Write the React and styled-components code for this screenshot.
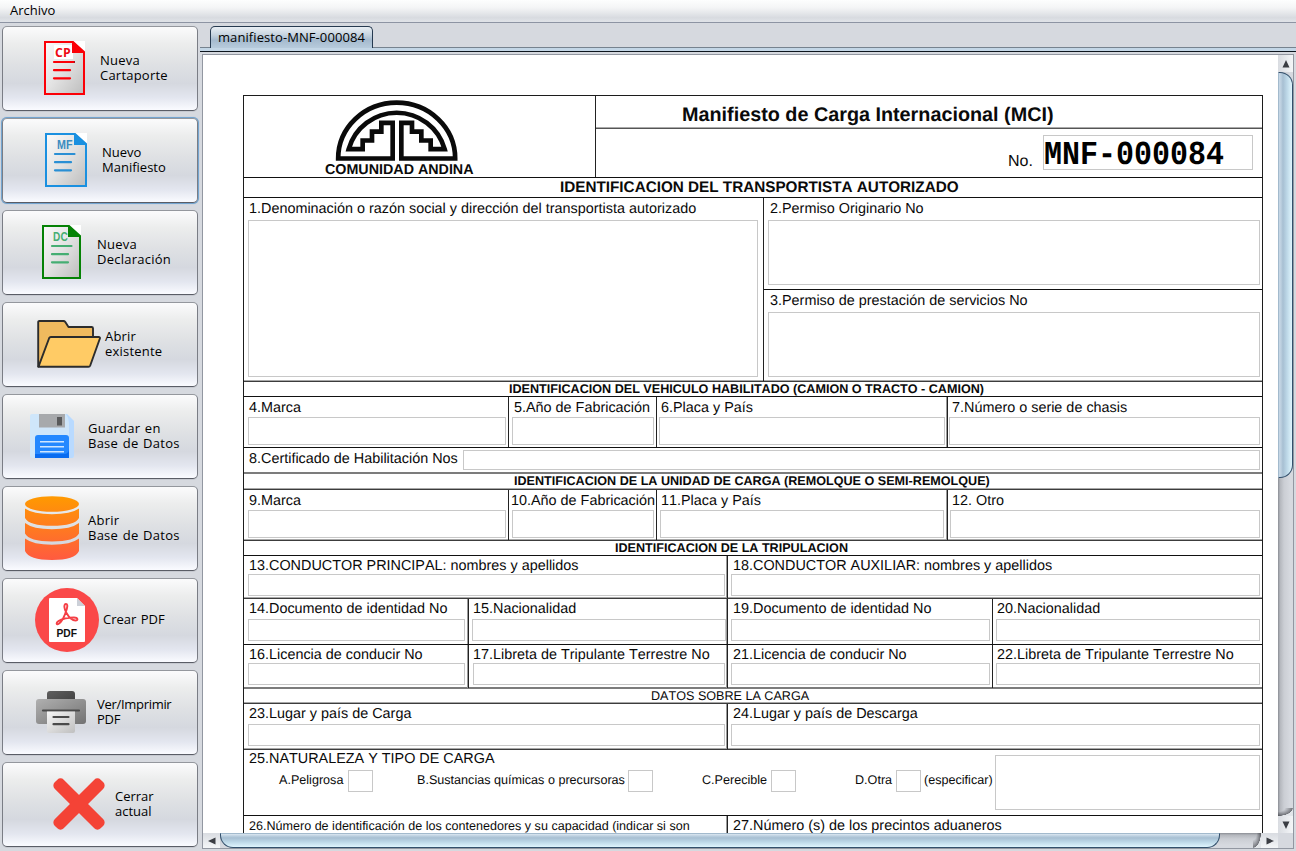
import React from "react";
import styled, { createGlobalStyle } from "styled-components";

const GlobalStyle = createGlobalStyle`
  * { box-sizing: border-box; }
  html, body { margin: 0; padding: 0; }
  body { background: #d6d9df; overflow: hidden; color: #000; }
`;

const uiFont = `13px/15px "Open Sans", "Noto Sans", sans-serif`;
const formFont = `"Liberation Sans", Arial, sans-serif`;

/* ---------- window ---------- */
const Window = styled.div`
  width: 1296px; height: 851px; overflow: hidden;
  display: flex; flex-direction: column;
  background: #d6d9df; font: ${uiFont}; font-variant-ligatures: none;
`;
const MenuBar = styled.div`
  height: 23px; flex: none; padding: 3px 10px 0;
  background: linear-gradient(#fdfefe 0, #f4f5f6 35%, #d8dbe0 80%, #e0e3e8 100%);
  border-bottom: 1px solid #8d94a3;
`;
const Body = styled.div`display: flex; flex: 1; min-height: 0;`;

/* ---------- sidebar ---------- */
const Sidebar = styled.div`
  width: 200px; flex: none; padding: 3px 0 0 2px;
  display: flex; flex-direction: column; gap: 7px;
`;
const ToolButton = styled.button`
  width: 196px; height: 85px; flex: none;
  display: flex; align-items: center; text-align: left;
  margin: 0; padding: 0 0 2px ${p => p.$left}px; gap: ${p => p.$gap}px;
  font: ${uiFont}; font-variant-ligatures: none; color: #000; white-space: pre;
  letter-spacing: ${p => p.$ls || 0}px; word-spacing: ${p => p.$ws || 0}px;
  border: 1px solid; border-color: #94979d #7a7d85 #5a5d66 #7a7d85; border-radius: 5px;
  background: linear-gradient(#fbfbfc 0, #eceded 20%, #dfe1e4 45%, #d5d8df 68%, #e3e6ef 85%, #fafbff 100%);
  box-shadow: ${p => p.$focused ? "0 0 0 1px #74a5d0, 0 0 1px 1px #8fb3d3" : "0 1px 0 #c6c9d0"};
  svg { flex: none; display: block; }
`;

/* ---------- tabs ---------- */
const Main = styled.div`
  flex: 1; min-width: 0; padding-top: 3px;
  display: flex; flex-direction: column;
`;
const TabStrip = styled.div`
  height: 26px; flex: none; display: flex; align-items: flex-start; padding-left: 10px;
  background: linear-gradient(#d6d9df 0 21px, #77838f 21px 22px, #c3d6e6 22px 25px, #0d151e 25px);
`;
const Tab = styled.div`
  width: 163px; height: 22px; padding: 3px 0 0 7px; white-space: nowrap; letter-spacing: 0.08px;
  border: 1px solid #263a50; border-bottom: 0; border-radius: 5px 5px 0 0;
  background: linear-gradient(#e9eff4 0, #c5d3df 38%, #a5bace 62%, #b7cbdc 100%);
`;

/* ---------- scroll pane ---------- */
const ScrollPane = styled.div`
  width: 1092px; height: 795px; margin: 2px 0 0 2px;
  border: 1px solid #9297a1;
  display: grid; grid-template-columns: 1075px 15px; grid-template-rows: 778px 15px;
`;
const Viewport = styled.div`background: #fff; overflow: hidden; padding: 40px 0 0 40px;`;
const VBar = styled.div`
  display: flex; flex-direction: column; overflow: hidden;
  background: linear-gradient(90deg, #8a8d94 0, #b4b7bd 2px, #cbced4 6px, #d6d9df 12px);
`;
const VThumb = styled.div`
  height: 406px; border: 1px solid #33506c; border-left-color: #a3bacd;
  border-radius: 0 13px 13px 0;
  background: linear-gradient(90deg, #c8d8e6 0, #bdd0e0 15%, #a7bfd2 30%, #bcd7e7 60%, #dff5fd 100%);
`;
const HBar = styled.div`
  display: flex; overflow: hidden;
  background: linear-gradient(#8a8d94 0, #b4b7bd 2px, #cbced4 6px, #d6d9df 12px);
`;
const HThumb = styled.div`
  width: 1000px; border: 1px solid #33506c; border-top-color: #a3bacd;
  border-radius: 0 0 13px 13px;
  background: linear-gradient(#dbe7f1 0, #bdd0e0 15%, #a7bfd2 30%, #bcd7e7 60%, #dff5fd 100%);
`;
const Spacer = styled.div`flex: 1;`;
const TrackEnd = styled.div`
  width: ${p => p.$w}px; height: ${p => p.$h}px; flex: none;
  background: radial-gradient(ellipse ${p => p.$w}px ${p => p.$h}px at 0 0,
    transparent 45%, rgba(50, 52, 58, 0.6) 96%, #e3e6ea 100%);
`;
const ArrowButton = styled.div`
  width: ${p => p.$w}px; height: ${p => p.$h}px; flex: none;
  display: flex; align-items: center; justify-content: center;
  background: linear-gradient(${p => p.$dir}, #d9dce1, #f4f6f8);
`;
const Corner = styled.div`background: #d6d9df;`;

/* ---------- form ---------- */
const Sheet = styled.div`
  width: 1020px; border: 1px solid #1c1c1c; border-bottom: 0;
  font: 14.4px/20px ${formFont}; text-rendering: geometricPrecision; font-kerning: none; color: #0a0a0a;
  white-space: nowrap;
`;
const line = { sharp: ["#111", "transparent"], soft: ["#3c3c3c", "#a8a8a8"], split: ["#7c7c7c", "#7c7c7c"] };
const Row = styled.div`
  display: flex; height: ${p => p.$h}px;
  border-bottom: 1px solid ${p => line[p.$line || "sharp"][0]};
  box-shadow: inset 0 -1px ${p => line[p.$line || "sharp"][1]};
`;
const SectionTitle = styled(Row)`
  align-items: center; padding: 0 0 ${p => p.$lift || 0}px ${p => p.$x}px;
  font-size: ${p => p.$size}px; font-weight: ${p => p.$plain ? 400 : 700};
  line-height: 14px;
`;
const Cell = styled.div`
  width: ${p => p.$w ? p.$w + "px" : "auto"}; flex: ${p => p.$w ? "none" : "1"};
  display: flex; flex-direction: column; align-items: stretch;
  border-right: ${p => p.$w ? "1px solid #222" : "0"};
  box-shadow: ${p => p.$w && p.$soft ? "inset -1px 0 #9a9a9a" : "none"};
`;
const Label = styled.div`
  height: ${p => p.$box}px; line-height: ${p => p.$lh + 2}px; padding-left: ${p => p.$x}px; flex: none;
  font-size: ${p => p.$size || 14.4}px;
`;
const Field = styled.div`
  height: ${p => p.$h}px; margin: 0 ${p => p.$r}px 0 ${p => p.$l}px; flex: none;
  border: 1px solid #c8c8c8; background: #fff;
`;

const HeaderLogo = styled.div`
  width: 352px; border-right: 1px solid #222; padding: 4px 0 0 81px; flex: none;
  font-size: 14.3px; font-weight: 700; line-height: 16px;
  svg { display: block; margin-left: 9px; }
`;
const HeaderRight = styled.div`flex: 1; display: flex; flex-direction: column;`;
const FormTitle = styled.div`
  height: 33px; padding: 4px 0 0 86px; border-bottom: 1px solid #555; box-shadow: inset 0 -1px #aaa;
  font-size: 19.8px; font-weight: 700; line-height: 30px;
`;
const NumberRow = styled.div`display: flex; padding: 6px 0 0 412px;`;
const NumberLabel = styled.div`width: 35px; padding-top: 17px; font-size: 16px;`;
const NumberField = styled.div`
  width: 210px; height: 35px; border: 1px solid #c8c8c8; padding-top: 3px;
  font: 700 30px/34px "Liberation Mono", monospace; color: #000;
`;
const NumberText = styled.span`display: block; height: 34px; transform: scaleY(1.12);`;
const Stack = styled.div`flex: 1; display: flex; flex-direction: column;`;
const InlineCell = styled.div`display: flex; flex: 1;`;
const CertField = styled.div`width: 797px; height: 20px; margin: 2px 0 0 0; border: 1px solid #c8c8c8;`;
const CertLabel = styled.div`width: 219px; padding-left: 5px; line-height: 22px;`;
const CargoLeft = styled.div`width: 751px; flex: none;`;
const Options = styled.div`display: flex; padding-left: 35px; font-size: 12.6px; line-height: 21px;`;
const Option = styled.div`width: ${p => p.$w}px; flex: none;`;
const Check = styled.div`
  width: 25px; height: 22px; border: 1px solid #c8c8c8; margin-right: ${p => p.$after}px; flex: none;
`;
const CargoBox = styled.div`width: 265px; height: 55px; margin-top: 5px; border: 1px solid #c8c8c8;`;

/* ---------- icons ---------- */
const DocIcon = ({ id, w, color, tint, text, font }) => (
  <svg width={w} height="54" viewBox={`0 0 ${w} 54`}>
    <defs>
      <linearGradient id={id} x1="0" y1="0" x2="1" y2="1">
        <stop offset="0" stopColor="#fafafa" /><stop offset=".5" stopColor="#e2e2e2" /><stop offset="1" stopColor="#bdbdbd" />
      </linearGradient>
    </defs>
    <path d={`M${w - 12} 0H${w}V12z`} fill="#fff" />
    <path d={`M1 1H${w - 12}L${w - 1} 11V53H1z`} fill={`url(#${id})`} stroke={color} strokeWidth="2" />
    {text === "CP" && <path d="M10 4H29V18H10z" fill="#fff" />}
    <path d={`M${w - 13} 0L${w} 12H${w - 13}z`} fill={color} />
    <text x={font.x} y="15.5" fill={tint} fontFamily={font.family} fontWeight="700" fontSize={font.size}
      textLength={font.len} lengthAdjust="spacingAndGlyphs">{text}</text>
    {text === "CP" && <path d="M29 21H31" stroke="#6d2030" strokeWidth="2.2" />}
    <path d="M10 21H29.500M10 29.200H26M10 37.300H26" stroke={text === "CP" ? color : text === "MF" ? "#2a8fd4" : tint} strokeWidth="2.2" strokeLinecap="round" />
  </svg>
);

const FolderIcon = () => (
  <svg width="64" height="48" viewBox="0 0 64 48">
    <path d="M1.2 46.5V2.2Q1.2 1 2.5 1H26.5Q27.6 1 28.3 2L31.5 7H54.5Q56 7 56 8.3V18L50 40 2 46z" fill="#f0ba5e" stroke="#2c2c2c" strokeWidth="1.9" strokeLinejoin="round" />
    <path d="M1.4 46.8L12.2 18Q12.7 17 13.8 17H61.5Q63.5 17 62.8 18.8L53.3 45.3Q52.7 46.8 51.4 46.8z" fill="#ffcb65" stroke="#2c2c2c" strokeWidth="1.9" strokeLinejoin="round" />
  </svg>
);

const FloppyIcon = () => (
  <svg width="44" height="44" viewBox="0 0 44 44">
    <path d="M2 0H37L44 7V42Q44 44 42 44H2Q0 44 0 42V2Q0 0 2 0z" fill="#cfe6fa" />
    <path d="M36 0H37L44 7V42Q44 44 42 44H39V9Q39 4 36 0z" fill="#b9daff" />
    <path d="M9 0H35V13.5H9z" fill="#a7a9ac" />
    <path d="M27 3H32V11.5H27z" fill="#58595b" />
    <path d="M5 24Q5 21 8 21H36Q39 21 39 24V44H5z" fill="#2488ff" />
    <path d="M5 44V40H34Q39 40 39 34V44z" fill="#0a6cf0" />
    <path d="M10 27.7H34M10 32.7H34M10 37.7H34" stroke="#cfe6ff" strokeWidth="1.5" />
  </svg>
);

const DatabaseIcon = () => (
  <svg width="54" height="64" viewBox="0 0 54 64">
    <defs>
      <linearGradient id="db" x1="0" y1="0" x2="0" y2="64" gradientUnits="userSpaceOnUse">
        <stop offset="0" stopColor="#ff9a00" /><stop offset="1" stopColor="#ff5a40" />
      </linearGradient>
    </defs>
    <g fill="url(#db)">
      <ellipse cx="27" cy="8" rx="27" ry="7.8" />
      <path d="M0 12.5Q8 18.2 27 18.2T54 12.5V22Q50 29.8 27 29.8T0 22z" />
      <path d="M0 27Q8 33.2 27 33.2T54 27V37.5Q50 45.4 27 45.4T0 37.5z" />
      <path d="M0 42.5Q8 48.7 27 48.7T54 42.5V55Q50 64 27 64T0 55z" />
    </g>
  </svg>
);

const PdfIcon = () => (
  <svg width="64" height="64" viewBox="0 0 64 64">
    <circle cx="32" cy="32" r="32" fill="#fa4848" />
    <path d="M15 10H42L50 18V53Q50 54 49 54H15Q14 54 14 53V11Q14 10 15 10z" fill="#fff" />
    <path d="M42 10L50 18H42z" fill="#ccd0d8" />
    <path d="M31 16C28.5 16 29 21 31.5 25C34 29.5 37.5 32.5 40.5 32.5C43.5 32.5 43 29.5 39 29.5C34 29.5 27 31 23.5 33C20.5 35 21.5 37 23.5 36C27 34 30 27 31.8 21C32.8 17.5 32.3 16 31 16z" fill="none" stroke="#f53f45" strokeWidth="1.9" />
    <text x="21.5" y="49" fontFamily="Liberation Sans, Arial, sans-serif" fontWeight="700" fontSize="11" fill="#111" textLength="20.5" lengthAdjust="spacingAndGlyphs">PDF</text>
  </svg>
);

const PrinterIcon = () => (
  <svg width="50" height="42" viewBox="0 0 50 42">
    <defs>
      <linearGradient id="prBody" x1="0" y1="0" x2="1" y2="1"><stop offset="0" stopColor="#b0b0b0" /><stop offset="1" stopColor="#727272" /></linearGradient>
      <linearGradient id="prTop" x1="0" y1="0" x2="1" y2="1"><stop offset="0" stopColor="#5f5f5f" /><stop offset="1" stopColor="#3d3d3d" /></linearGradient>
      <linearGradient id="prPage" x1="0" y1="0" x2="1" y2="1"><stop offset="0" stopColor="#f6f6f6" /><stop offset="1" stopColor="#bfbfbf" /></linearGradient>
    </defs>
    <rect x="11" y="0" width="28" height="14" rx="3" fill="url(#prTop)" />
    <rect x="0" y="8" width="50" height="25" rx="3" fill="url(#prBody)" />
    <path d="M7 19.5H43" stroke="#4a4a4a" strokeWidth="2.2" strokeLinecap="round" />
    <path d="M11 20.5H39V40Q39 42 37 42H13Q11 42 11 40z" fill="url(#prPage)" />
    <path d="M17.5 26H32.5M17.5 33.2H32.5" stroke="#4a4a4a" strokeWidth="2.2" strokeLinecap="round" />
  </svg>
);

const CrossIcon = () => (
  <svg width="52" height="52" viewBox="0 0 52 52">
    <g transform="translate(26 26)" fill="#f44336">
      <rect x="-32.500" y="-6.400" width="65" height="12.800" rx="4.500" transform="rotate(45)" />
      <rect x="-32.500" y="-6.400" width="65" height="12.800" rx="4.500" transform="rotate(-45)" />
    </g>
  </svg>
);

const AndinaLogo = () => (
  <svg width="126" height="62" viewBox="282 30 378 186">
    <path d="M294.500 205.500A175.500 167.500 0 0 1 645.500 205.500H484V98.500H516V125H544V151.500H572V177.500H614A149.500 149.500 0 0 0 326 177.500H368V151.500H396V125H424V98.500H458V205.500z"
      fill="none" stroke="#0a0a0a" strokeWidth="14" />
  </svg>
);

const Arrow = ({ d }) => <svg width="8" height="8" viewBox="0 0 8 8"><path d={d} fill="#3b3e44" /></svg>;

const docFont = { family: "Liberation Sans, Arial, sans-serif", size: 12 };
const tools = [
  { text: "Nueva\nCartaporte", left: 41, gap: 15, ls: 0.22, icon: <DocIcon id="d1" w={41} color="#fb0007" tint="#ee0a14" text="CP" font={{ family: "Open Sans, sans-serif", size: 12.5, x: 11, len: 16 }} /> },
  { text: "Nuevo\nManifiesto", left: 42, gap: 15, focused: true, icon: <DocIcon id="d2" w={42} color="#1a90e0" tint="#3c8dc0" text="MF" font={{ ...docFont, x: 12, len: 15.5 }} /> },
  { text: "Nueva\nDeclaración", left: 39, gap: 16, ls: 0.25, icon: <DocIcon id="d3" w={39} color="#058205" tint="#45ae73" text="DC" font={{ ...docFont, x: 11, len: 15 }} /> },
  { text: "Abrir\nexistente", left: 34, gap: 4, ls: 0.2, icon: <FolderIcon /> },
  { text: "Guardar en\nBase de Datos", left: 27, gap: 14, ls: 0.25, ws: 1, icon: <FloppyIcon /> },
  { text: "Abrir\nBase de Datos", left: 22, gap: 9, ls: 0.25, ws: 1, icon: <DatabaseIcon /> },
  { text: "Crear PDF", left: 32, gap: 4, ws: 1, icon: <PdfIcon /> },
  { text: "Ver/Imprimir\nPDF", left: 33, gap: 11, ls: -0.3, icon: <PrinterIcon /> },
  { text: "Cerrar\nactual", left: 50, gap: 10, icon: <CrossIcon /> },
];

/* A row of labelled inputs: label box height doubles as the input's top offset. */
const FieldRow = ({ h, box, lh, field, cells, edge }) => (
  <Row $h={h} $line={edge}>
    {cells.map(c => (
      <Cell key={c.t} $w={c.w} $soft={c.soft}>
        <Label $box={box} $lh={lh} $x={c.x}>{c.t}</Label>
        <Field $h={field} $l={c.l} $r={c.r} />
      </Cell>
    ))}
  </Row>
);

const Form = () => (
  <Sheet>
    <Row $h={82}>
      <HeaderLogo><AndinaLogo />COMUNIDAD ANDINA</HeaderLogo>
      <HeaderRight>
        <FormTitle>Manifiesto de Carga Internacional (MCI)</FormTitle>
        <NumberRow>
          <NumberLabel>No.</NumberLabel>
          <NumberField><NumberText>MNF-000084</NumberText></NumberField>
        </NumberRow>
      </HeaderRight>
    </Row>
    <SectionTitle $h={20} $x={316} $size={15.27}>IDENTIFICACION DEL TRANSPORTISTA AUTORIZADO</SectionTitle>
    <Row $h={184} $line="soft">
      <Cell $w={520}>
        <Label $box={22} $lh={21} $x={5}>1.Denominación o razón social y dirección del transportista autorizado</Label>
        <Field $h={157} $l={4} $r={5} />
      </Cell>
      <Stack>
        <Row $h={92}>
          <Cell>
            <Label $box={22} $lh={21} $x={6}>2.Permiso Originario No</Label>
            <Field $h={65} $l={4} $r={2} />
          </Cell>
        </Row>
        <Cell>
          <Label $box={22} $lh={21} $x={6}>3.Permiso de prestación de servicios No</Label>
          <Field $h={65} $l={4} $r={2} />
        </Cell>
      </Stack>
    </Row>
    <SectionTitle $h={15} $x={265} $size={12.6}>IDENTIFICACION DEL VEHICULO HABILITADO (CAMION O TRACTO - CAMION)</SectionTitle>
    <FieldRow h={51} box={20} lh={20} field={28} cells={[
      { t: "4.Marca", w: 265, x: 5, l: 4, r: 2 },
      { t: "5.Año de Fabricación", w: 148, x: 5, l: 3, r: 2 },
      { t: "6.Placa y País", w: 291, x: 4, l: 2, r: 2, soft: true },
      { t: "7.Número o serie de chasis", x: 4, l: 1, r: 2 },
    ]} />
    <Row $h={26} $line="split">
      <InlineCell><CertLabel>8.Certificado de Habilitación Nos</CertLabel><CertField /></InlineCell>
    </Row>
    <SectionTitle $h={16} $line="soft" $x={270} $size={12.6} $lift={2}>IDENTIFICACION DE LA UNIDAD DE CARGA (REMOLQUE O SEMI-REMOLQUE)</SectionTitle>
    <FieldRow h={51} box={20} lh={20} field={28} edge="soft" cells={[
      { t: "9.Marca", w: 265, x: 5, l: 4, r: 2 },
      { t: "10.Año de Fabricación", w: 148, x: 2, l: 3, r: 2 },
      { t: "11.Placa y País", w: 291, x: 4, l: 3, r: 3, soft: true },
      { t: "12. Otro", x: 4, l: 2, r: 2 },
    ]} />
    <SectionTitle $h={15} $x={371} $size={12.6}>IDENTIFICACION DE LA TRIPULACION</SectionTitle>
    <FieldRow h={43} box={18} lh={18} field={22} edge="soft" cells={[
      { t: "13.CONDUCTOR PRINCIPAL: nombres y apellidos", w: 484, x: 5, l: 4, r: 2, soft: true },
      { t: "18.CONDUCTOR AUXILIAR: nombres y apellidos", x: 5, l: 3, r: 2 },
    ]} />
    <FieldRow h={46} box={20} lh={19} field={22} cells={[
      { t: "14.Documento de identidad No", w: 225, x: 5, l: 4, r: 3, soft: true },
      { t: "15.Nacionalidad", w: 259, x: 4, l: 3, r: 1, soft: true },
      { t: "19.Documento de identidad No", w: 265, x: 5, l: 3, r: 2 },
      { t: "20.Nacionalidad", x: 4, l: 3, r: 2 },
    ]} />
    <FieldRow h={44} box={18} lh={19} field={22} edge="split" cells={[
      { t: "16.Licencia de conducir No", w: 225, x: 5, l: 4, r: 3, soft: true },
      { t: "17.Libreta de Tripulante Terrestre No", w: 259, x: 4, l: 4, r: 2, soft: true },
      { t: "21.Licencia de conducir No", w: 265, x: 5, l: 3, r: 2 },
      { t: "22.Libreta de Tripulante Terrestre No", x: 4, l: 3, r: 2 },
    ]} />
    <SectionTitle $h={15} $line="soft" $x={407} $size={12.6} $plain>DATOS SOBRE LA CARGA</SectionTitle>
    <FieldRow h={46} box={20} lh={18} field={22} edge="soft" cells={[
      { t: "23.Lugar y país de Carga", w: 484, x: 5, l: 4, r: 2, soft: true },
      { t: "24.Lugar y país de Descarga", x: 5, l: 3, r: 2 },
    ]} />
    <Row $h={66}>
      <CargoLeft>
        <Label $box={20} $lh={17} $x={5}>25.NATURALEZA Y TIPO DE CARGA</Label>
        <Options>
          <Option $w={69}>A.Peligrosa</Option><Check $after={44} />
          <Option $w={211}>B.Sustancias químicas o precursoras</Option><Check $after={49} />
          <Option $w={69}>C.Perecible</Option><Check $after={59} />
          <Option $w={41}>D.Otra</Option><Check $after={3} />
          <Option $w={70}>(especificar)</Option>
        </Options>
      </CargoLeft>
      <CargoBox />
    </Row>
    <Row $h={60}>
      <Cell $w={484} $soft><Label $box={20} $lh={18} $x={5} $size={12.57}>26.Número de identificación de los contenedores y su capacidad (indicar si son</Label></Cell>
      <Cell><Label $box={20} $lh={19} $x={5}>27.Número (s) de los precintos aduaneros</Label></Cell>
    </Row>
  </Sheet>
);

export default function App() {
  return (
    <Window>
      <GlobalStyle />
      <MenuBar>Archivo</MenuBar>
      <Body>
        <Sidebar>
          {tools.map(t => (
            <ToolButton key={t.text} $left={t.left} $gap={t.gap} $ls={t.ls} $ws={t.ws} $focused={t.focused}>
              {t.icon}<span>{t.text}</span>
            </ToolButton>
          ))}
        </Sidebar>
        <Main>
          <TabStrip><Tab>manifiesto-MNF-000084</Tab></TabStrip>
          <ScrollPane>
            <Viewport><Form /></Viewport>
            <VBar>
              <ArrowButton $w={15} $h={17} $dir="90deg"><Arrow d="M4 0L7.500 7.500H.5z" /></ArrowButton>
              <VThumb />
              <Spacer />
              <TrackEnd $w={15} $h={8} />
              <ArrowButton $w={15} $h={17} $dir="90deg"><Arrow d="M4 8L7.500 .5H.5z" /></ArrowButton>
            </VBar>
            <HBar>
              <ArrowButton $w={17} $h={15} $dir="180deg"><Arrow d="M0 4L7.500 .5V7.500z" /></ArrowButton>
              <HThumb />
              <Spacer />
              <TrackEnd $w={8} $h={15} />
              <ArrowButton $w={17} $h={15} $dir="180deg"><Arrow d="M8 4L.5 .5V7.500z" /></ArrowButton>
            </HBar>
            <Corner />
          </ScrollPane>
        </Main>
      </Body>
    </Window>
  );
}
